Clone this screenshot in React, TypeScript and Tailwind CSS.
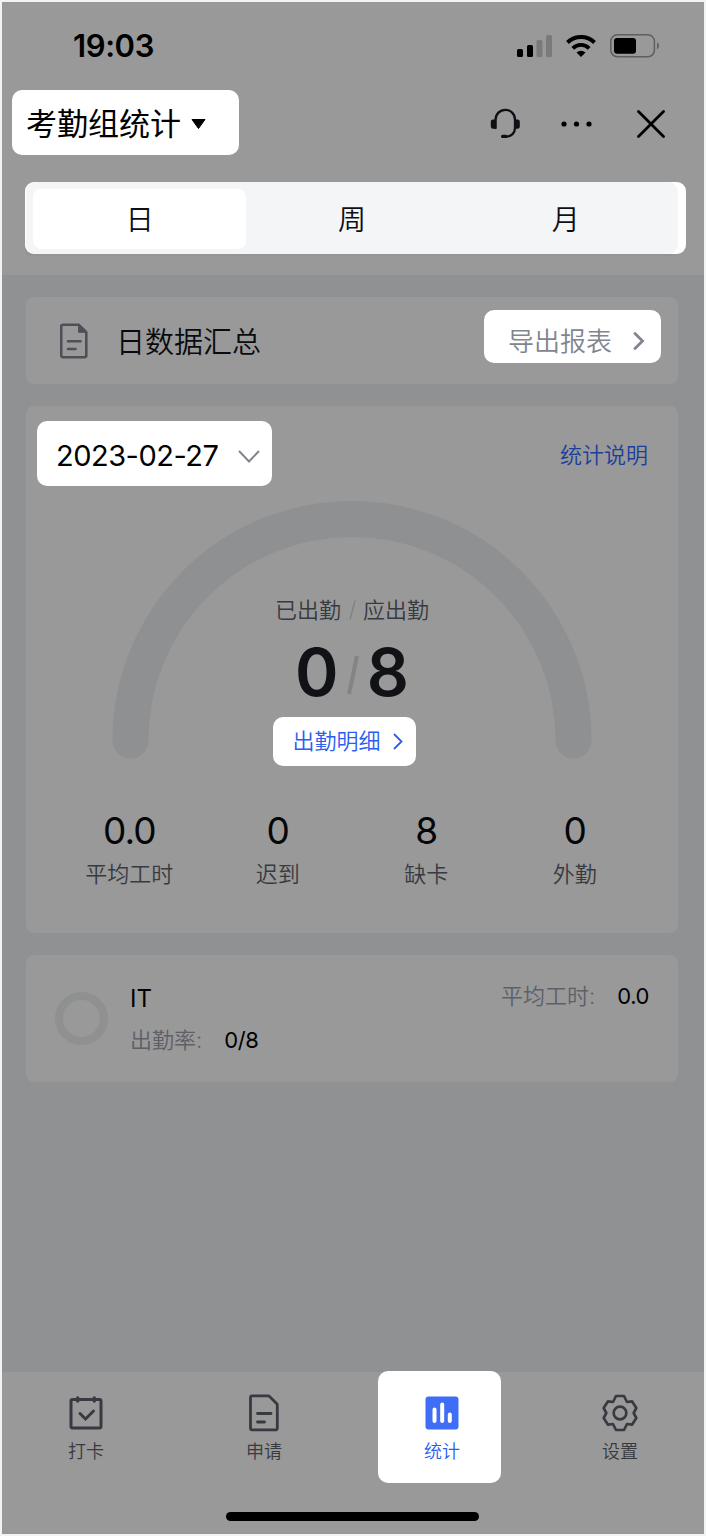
import type { ReactNode } from 'react';

interface Stat {
  label: string;
  value: string;
}

const stats: Stat[] = [
  { label: '平均工时', value: '0.0' },
  { label: '迟到', value: '0' },
  { label: '缺卡', value: '8' },
  { label: '外勤', value: '0' },
];

function SignalIcon() {
  return (
    <svg width="36" height="24" viewBox="0 0 36 24">
      <rect x="0" y="15" width="6" height="8" rx="1.5" fill="#000" />
      <rect x="10" y="11" width="6" height="12" rx="1.5" fill="#000" />
      <rect x="19.5" y="6" width="6" height="17" rx="1.5" fill="#7a7a7a" />
      <rect x="29" y="1" width="6" height="22" rx="1.5" fill="#7a7a7a" />
    </svg>
  );
}

function WifiIcon() {
  return (
    <svg width="30" height="22" viewBox="0 0 30 22" fill="none" stroke="#000">
      <path d="M1.5 7.5a19.2 19.2 0 0 1 27 0" strokeWidth="4" />
      <path d="M6.8 13.3a11.6 11.6 0 0 1 16.4 0" strokeWidth="3.8" />
      <path d="M10.5 17.6a6.4 6.4 0 0 1 9 0L15 22Z" fill="#000" stroke="none" />
    </svg>
  );
}

function BatteryIcon() {
  return (
    <svg width="50" height="24" viewBox="0 0 50 24">
      <rect x="0.8" y="0.8" width="43.6" height="22" rx="6.5" fill="none" stroke="#5e5e5e" strokeWidth="1.5" />
      <rect x="4" y="4" width="22" height="15.8" rx="3" fill="#000" />
      <path d="M47 8.5c2.6 1 2.6 5.8 0 6.8Z" fill="#5e5e5e" />
    </svg>
  );
}

function HeadsetIcon() {
  return (
    <svg width="30" height="32" viewBox="0 0 30 32" fill="none" stroke="#0d0f14" strokeWidth="2.3" strokeLinecap="round">
      <path d="M5.6 20V11.5a9.7 9.7 0 0 1 19.4 0V20c0 5-3.6 8.6-9 8.6" />
      <path d="M12.6 28.4h3.2" strokeWidth="3.2" />
      <path d="M6 11.5H3a2.2 2.2 0 0 0-2.200 2.200V18.600a2.200 2.200 0 0 0 2.200 2.200H6Z" fill="#0d0f14" stroke="none" />
      <path d="M24.600 11.500h3a2.200 2.200 0 0 1 2.200 2.200v4.900a2.200 2.200 0 0 1-2.200 2.200h-3Z" fill="#0d0f14" stroke="none" />
    </svg>
  );
}

function SheetIcon() {
  return (
    <svg width="28" height="36" viewBox="0 0 28 36" fill="none" stroke="#4d5057" strokeWidth="2.6" strokeLinecap="round" strokeLinejoin="round">
      <path d="M3.200 1.700H18.600L26.300 9.300V32.300a2 2 0 0 1-2 2H3.200a2 2 0 0 1-2-2V3.700a2 2 0 0 1 2-2Z" />
      <path d="M18.600 2V9.300H26" fill="#4d5057" strokeWidth="1" />
      <path d="M8 18.300H20.500M8 26H15.500" />
    </svg>
  );
}

function ClockInIcon() {
  return (
    <svg width="34" height="38" viewBox="0 0 34 38" fill="none" stroke="#373a40" strokeWidth="3" strokeLinecap="round" strokeLinejoin="round">
      <rect x="2" y="5.500" width="30" height="28.500" rx="1.500" />
      <path d="M8.700 4v3M25.300 4v3" strokeWidth="3.400" />
      <path d="M11 19.500l5.500 5.500 8-8" strokeLinejoin="miter" />
    </svg>
  );
}

function ApplyIcon() {
  return (
    <svg width="30" height="38" viewBox="0 0 30 38" fill="none" stroke="#373a40" strokeWidth="2.800" strokeLinecap="round" strokeLinejoin="round">
      <path d="M3 1.900H20L28.300 10.300V34.300a1.600 1.600 0 0 1-1.600 1.600H3A1.600 1.600 0 0 1 1.500 34.300V3.500A1.600 1.600 0 0 1 3 1.900Z" />
      <path d="M8.500 19.500H22M8.500 28H15.500" />
    </svg>
  );
}

function ChartIcon() {
  return (
    <svg width="34" height="38" viewBox="0 0 34 38">
      <rect x="0.500" y="2.500" width="33" height="33" rx="3" fill="#3f6df6" />
      <path d="M9.500 15.500v11.500M17.200 10.500v16.500M24.800 20.500v6.500" stroke="#fff" strokeWidth="4" strokeLinecap="round" />
    </svg>
  );
}

function GearIcon() {
  return (
    <svg width="36" height="38" viewBox="0 0 108 114" fill="none" stroke="#373a40" strokeWidth="8" strokeLinejoin="round">
      <path d="M42 6H66L75 24L90 22L103 42L95 57L103 72L90 92L75 90L66 108H42L33 90L18 92L5 72L13 57L5 42L18 22L33 24Z" />
      <circle cx="54" cy="57" r="19" />
    </svg>
  );
}

function NavItem({ icon, label, active = false }: { icon: ReactNode; label: string; active?: boolean }) {
  return (
    <div className="relative flex justify-center">
      {active && <div className="absolute -top-px left-[25px] h-28 w-[123px] rounded-[10px] bg-white" />}
      <div className="relative flex flex-col items-center pt-[22px]">
        {icon}
        <span className={active ? 'mt-2 text-[18px] leading-6 text-[#2b5df0]' : 'mt-2 text-[18px] leading-6 text-[#373a40]'}>
          {label}
        </span>
      </div>
    </div>
  );
}

function Header() {
  return (
    <header className="h-[273px] bg-[#999999]">
      {/* Status bar */}
      <div className="flex h-[88px] items-center justify-between pr-11 pl-[71px]">
        <span className="pb-0.5 text-[31px] leading-none font-semibold tracking-[-0.4px] text-black">19:03</span>
        <div className="flex items-center">
          <SignalIcon />
          <div className="ml-[13px]">
            <WifiIcon />
          </div>
          <div className="ml-[14px]">
            <BatteryIcon />
          </div>
        </div>
      </div>

      {/* Title */}
      <div className="flex h-[65px] items-center pl-2.5">
        <button className="flex h-[65px] w-[227px] items-center rounded-[10px] bg-white pt-0.5 pl-[14px]">
          <span className="text-[31px] leading-none font-normal text-black">考勤组统计</span>
          <svg className="ml-[10px]" width="15" height="10" viewBox="0 0 15 10">
            <path d="M1 0.500h13L7.500 9.500Z" fill="#000" stroke="#000" strokeLinejoin="round" />
          </svg>
        </button>
        <div className="ml-[251px] flex items-center pt-0.5">
          <HeadsetIcon />
          <svg className="ml-[41px]" width="32" height="6" viewBox="0 0 32 6">
            <circle cx="3" cy="3" r="2.600" />
            <circle cx="15.500" cy="3" r="2.600" />
            <circle cx="28" cy="3" r="2.600" />
          </svg>
          <svg className="ml-[44px]" width="28" height="28" viewBox="0 0 28 28" stroke="#000" strokeWidth="2.800" strokeLinecap="round">
            <path d="M1.500 1.500l25 25M26.500 1.500l-25 25" />
          </svg>
        </div>
      </div>

      {/* Day / week / month */}
      <div className="mt-[27px] ml-[23px] h-[72px] w-[661px] rounded-[9px] bg-white pl-px shadow-[-4px_6px_0_-4px_#949596]">
        <div className="grid h-full w-[652px] grid-cols-3 items-center rounded-[10px] bg-[#f4f5f7] px-[7px] pt-0.5 text-center text-[28px] text-[#0d0f14]">
          <div className="flex h-[60px] items-center justify-center rounded-lg bg-white pt-0.5 pl-px">日</div>
          <div className="pt-0.5">周</div>
          <div className="pt-0.5 pl-0.5">月</div>
        </div>
      </div>
    </header>
  );
}

function AttendanceCard() {
  return (
    <section className="h-[527px] rounded-lg bg-[#999999] pt-[15px]">
      <div className="flex items-center justify-between pr-[30px] pl-[11px]">
        <button className="flex h-[65px] w-[235px] items-center rounded-[10px] bg-white pt-[5px] pl-[19px] text-[29px] font-normal tracking-[-0.5px] text-black">
          2023-02-27
          <svg className="ml-[20px]" width="22" height="13" viewBox="0 0 22 13" fill="none" stroke="#81858f" strokeWidth="2">
            <path d="M1 1l10 10.500L21 1" />
          </svg>
        </button>
        <a className="pt-1 text-[22px] text-[#1c3f9c]">统计说明</a>
      </div>

      {/* Gauge, the numbers share its grid cell */}
      <div className="mt-[14px] grid justify-items-center">
        <svg className="col-start-1 row-start-1" width="480" height="260" viewBox="0 0 480 260" fill="none">
          <path d="M18.500 240.500a221.500 221.500 0 0 1 443 0" stroke="#8f9092" strokeWidth="36" strokeLinecap="round" />
        </svg>
        <div className="col-start-1 row-start-1 flex flex-col items-center pt-[95px]">
          <div className="flex items-center text-[22px] leading-[30px] text-[#373a40]">
            已出勤
            <svg className="mx-[7.500px]" width="7" height="20" viewBox="0 0 7 20">
              <path d="M6 0.500L1 19.500" stroke="#828385" strokeWidth="1.500" />
            </svg>
            应出勤
          </div>
          <div className="mt-[7px] flex items-center text-[66px] leading-[80px] font-semibold text-[#101216]">
            0
            <svg className="mx-[7px] mt-[5px]" width="14" height="40" viewBox="0 0 14 40">
              <path d="M11 1L3 39" stroke="#838486" strokeWidth="4" />
            </svg>
            8
          </div>
          <button className="mt-[5px] mr-[16px] flex h-[49px] w-[143px] items-center rounded-[10px] bg-white pl-[20px] text-[22px] text-[#2b5df0]">
            出勤明细
            <svg className="ml-[12px]" width="10" height="17" viewBox="0 0 10 17" fill="none" stroke="#2b5df0" strokeWidth="1.800">
              <path d="M1 1l7.500 7.500L1 16" />
            </svg>
          </button>
        </div>
      </div>

      <div className="mt-[41px] grid grid-cols-4 px-[29px] text-center">
        {stats.map((stat) => (
          <div key={stat.label}>
            <div className="text-[37px] leading-[48px] font-normal tracking-[-1px] text-[#050608]">{stat.value}</div>
            <div className="mt-[4px] text-[22px] leading-[30px] text-[#373a40]">{stat.label}</div>
          </div>
        ))}
      </div>
    </section>
  );
}

function DepartmentCard() {
  return (
    <section className="flex h-[127px] rounded-lg bg-[#999999] pr-[29px] pl-[29px]">
      <div className="mt-[37px] size-[53px] rounded-full border-8 border-[#8f9092]" />
      <div className="ml-[22px] pt-[28px]">
        <div className="text-[24px] leading-8 font-normal text-black">IT</div>
        <div className="mt-[10px] flex text-[22px] leading-[30px]">
          <span className="text-[#5d6067]">出勤率:</span>
          <span className="ml-[22px] font-normal tracking-[-0.4px] text-black">0/8</span>
        </div>
      </div>
      <div className="ml-auto flex pt-[26px] text-[22px] leading-[30px]">
        <span className="text-[#5d6067]">平均工时:</span>
        <span className="ml-[22px] font-normal tracking-[-0.4px] text-black">0.0</span>
      </div>
    </section>
  );
}

export default function App() {
  return (
    <div className="h-[1536px] w-[706px] bg-[#f2f3f3] p-0.5 font-['Inter','Noto_Sans_CJK_SC',sans-serif] font-[350]" lang="zh-CN">
      <div className="flex h-full flex-col overflow-hidden">
        <Header />

        <main className="flex flex-1 flex-col gap-[22px] bg-[#8f9193] pt-[22px] pr-[26px] pl-6">
          <section className="flex h-[87px] items-center rounded-lg bg-[#999999] pr-[17px] pl-[34px]">
            <SheetIcon />
            <span className="ml-[28px] pt-1 text-[29px] text-[#0a0b0e]">日数据汇总</span>
            <button className="-mt-2 ml-auto flex h-[53px] w-[177px] items-center rounded-[10px] bg-white pt-2 pl-6 text-[26px] text-[#81858f]">
              <span className="pt-0.5">导出报表</span>
              <svg className="ml-[21px]" width="12" height="18" viewBox="0 0 12 18" fill="none" stroke="#81858f" strokeWidth="2.800" strokeLinecap="round">
                <path d="M2 1.500L9.500 9 2 16.500" />
              </svg>
            </button>
          </section>
          <AttendanceCard />
          <DepartmentCard />
        </main>

        <footer className="relative h-[162px] bg-[#999999]">
          <nav className="-mr-[5px] -ml-[5px] grid grid-cols-4">
            <NavItem icon={<ClockInIcon />} label="打卡" />
            <NavItem icon={<ApplyIcon />} label="申请" />
            <NavItem icon={<ChartIcon />} label="统计" active />
            <NavItem icon={<GearIcon />} label="设置" />
          </nav>
          {/* Home indicator */}
          <div className="mt-12 ml-[224px] h-[9px] w-[253px] rounded-full bg-black" />
        </footer>
      </div>
    </div>
  );
}
